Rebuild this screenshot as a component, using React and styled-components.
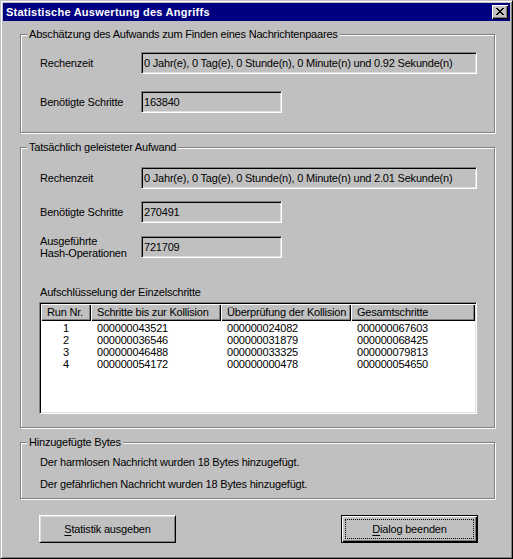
import React from 'react';
import styled, { createGlobalStyle, css } from 'styled-components';

const Global = createGlobalStyle`
  html, body { margin: 0; padding: 0; background: #c0c0c0; }
  body {
    font-family: "Liberation Sans", Arial, sans-serif;
    font-size: 11px;
    letter-spacing: -0.2px;
    color: #000;
  }
  * { box-sizing: border-box; }
`;

const Window = styled.div`
  width: 513px;
  height: 559px;
  background: #c0c0c0;
  border: 1px solid;
  border-color: #c0c0c0 #000 #000 #c0c0c0;
  box-shadow: inset 1px 1px #fff, inset -1px -1px #808080;
  padding: 2px;
  display: flex;
  flex-direction: column;
`;

const TitleBar = styled.div`
  height: 18px;
  background: #000080;
  display: flex;
  align-items: center;
  justify-content: space-between;
  padding: 0 2px 0 3px;
`;

const Title = styled.span`
  color: #fff;
  font-weight: bold;
  font-size: 11px;
  letter-spacing: 0.25px;
  line-height: 18px;
`;

const CloseButton = styled.div`
  width: 16px;
  height: 14px;
  background: #c0c0c0;
  box-shadow: inset 1px 1px #fff, inset -1px -1px #000, inset -2px -2px #808080;
  display: flex;
  align-items: flex-start;
  justify-content: flex-start;
  padding: 3px 0 0 4px;
  svg { display: block; }
`;

const Body = styled.div`
  flex: 1;
  display: flex;
  flex-direction: column;
  padding: 7px 15px 0 17px;
`;

const Group = styled.fieldset`
  margin: 0 0 ${p => p.$mb || 0}px 0;
  padding: 0;
  min-width: 0;
  border: 1px solid #808080;
  box-shadow: 1px 1px 0 #fff, inset 1px 1px 0 #fff;
`;

const Legend = styled.legend`
  margin-left: 6px;
  padding: 0 2px;
  background: #c0c0c0;
  line-height: 13px;
  height: 13px;
`;

const GroupBody = styled.div`
  padding: ${p => p.$pt}px 0 ${p => p.$pb}px 18px;
  display: flex;
  flex-direction: column;
  align-items: flex-start;
`;

const FieldGrid = styled.div`
  display: grid;
  grid-template-columns: 101px max-content;
  row-gap: ${p => p.$gap}px;
  align-items: center;
  margin-left: 1px;
`;

const Label = styled.div`
  line-height: 12px;
`;

const Field = styled.div`
  width: ${p => p.$w}px;
  height: 22px;
  border: 1px solid;
  border-color: #808080 #fff #fff #808080;
  box-shadow: inset 1px 1px #000, inset -1px -1px #dfdfdf;
  padding: 0 2px;
  line-height: 20px;
  white-space: nowrap;
  overflow: hidden;
`;

const Caption = styled.div`
  margin: 27px 0 3px 1px;
  line-height: 13px;
`;

const ListView = styled.div`
  width: 438px;
  height: 112px;
  border: 1px solid;
  border-color: #808080 #fff #fff #808080;
  box-shadow: inset 1px 1px #000, inset -1px -1px #dfdfdf;
  padding: 1px;
  background: #fff;
  display: flex;
  flex-direction: column;
`;

const columns = '50px 130px 130px 1fr';

const HeaderRow = styled.div`
  display: grid;
  grid-template-columns: ${columns};
`;

const HeadCell = styled.div`
  height: 17px;
  background: #c0c0c0;
  box-shadow: inset 1px 1px #fff, inset -1px -1px #000, inset -2px -2px #808080;
  padding-left: 6px;
  line-height: 16px;
  white-space: nowrap;
  overflow: hidden;
`;

const Rows = styled.div`
  padding-top: 1px;
`;

const Row = styled.div`
  display: grid;
  grid-template-columns: ${columns};
  height: 12px;
  line-height: 12px;
`;

const Cell = styled.div`
  padding-left: ${p => (p.$center ? 0 : 6)}px;
  text-align: ${p => (p.$center ? 'center' : 'left')};
  white-space: nowrap;
`;

const Line = styled.div`
  line-height: 13px;
  margin-left: 1px;
  & + & { margin-top: 9px; }
`;

const ButtonRow = styled.div`
  display: flex;
  justify-content: space-between;
  margin-top: 16px;
  padding: 0 17px 0 19px;
`;

const Button = styled.button`
  width: 137px;
  height: 28px;
  padding: 3px;
  margin: 0;
  background: #c0c0c0;
  font: inherit;
  letter-spacing: inherit;
  color: #000;
  border: 1px solid;
  border-color: #fff #000 #000 #fff;
  box-shadow: inset 1px 1px #dfdfdf, inset -1px -1px #808080;
  ${p => p.$default && css`
    border-color: #000;
    box-shadow: inset 1px 1px #fff, inset -1px -1px #000, inset -2px -2px #808080;
  `}
`;

const ButtonLabel = styled.span`
  display: flex;
  align-items: center;
  justify-content: center;
  height: 100%;
  border: 1px dotted ${p => (p.$focus ? '#000' : 'transparent')};
  u { text-decoration: underline; text-underline-offset: 2px; }
`;

const CloseGlyph = () => (
  <svg width="8" height="7" viewBox="0 0 8 7" shapeRendering="crispEdges">
    <g fill="#000">
      <rect x="0" y="0" width="2" height="1" />
      <rect x="6" y="0" width="2" height="1" />
      <rect x="1" y="1" width="2" height="1" />
      <rect x="5" y="1" width="2" height="1" />
      <rect x="2" y="2" width="4" height="1" />
      <rect x="3" y="3" width="2" height="1" />
      <rect x="2" y="4" width="4" height="1" />
      <rect x="1" y="5" width="2" height="1" />
      <rect x="5" y="5" width="2" height="1" />
      <rect x="0" y="6" width="2" height="1" />
      <rect x="6" y="6" width="2" height="1" />
    </g>
  </svg>
);

const runs = [
  ['1', '000000043521', '000000024082', '000000067603'],
  ['2', '000000036546', '000000031879', '000000068425'],
  ['3', '000000046488', '000000033325', '000000079813'],
  ['4', '000000054172', '000000000478', '000000054650'],
];

export default function App() {
  return (
    <>
      <Global />
      <Window>
        <TitleBar>
          <Title>Statistische Auswertung des Angriffs</Title>
          <CloseButton><CloseGlyph /></CloseButton>
        </TitleBar>
        <Body>
          <Group $mb={8}>
            <Legend>Abschätzung des Aufwands zum Finden eines Nachrichtenpaares</Legend>
            <GroupBody $pt={11} $pb={19}>
              <FieldGrid $gap={17}>
                <Label>Rechenzeit</Label>
                <Field $w={336}>0 Jahr(e), 0 Tag(e), 0 Stunde(n), 0 Minute(n) und 0.92 Sekunde(n)</Field>
                <Label>Benötigte Schritte</Label>
                <Field $w={141}>163840</Field>
              </FieldGrid>
            </GroupBody>
          </Group>

          <Group $mb={8}>
            <Legend>Tatsächlich geleisteter Aufwand</Legend>
            <GroupBody $pt={13} $pb={13}>
              <FieldGrid $gap={12}>
                <Label>Rechenzeit</Label>
                <Field $w={336}>0 Jahr(e), 0 Tag(e), 0 Stunde(n), 0 Minute(n) und 2.01 Sekunde(n)</Field>
                <Label>Benötigte Schritte</Label>
                <Field $w={141}>270491</Field>
                <Label>Ausgeführte<br />Hash-Operationen</Label>
                <Field $w={141}>721709</Field>
              </FieldGrid>
              <Caption>Aufschlüsselung der Einzelschritte</Caption>
              <ListView>
                <HeaderRow>
                  <HeadCell>Run Nr.</HeadCell>
                  <HeadCell>Schritte bis zur Kollision</HeadCell>
                  <HeadCell>Überprüfung der Kollision</HeadCell>
                  <HeadCell>Gesamtschritte</HeadCell>
                </HeaderRow>
                <Rows>
                  {runs.map(r => (
                    <Row key={r[0]}>
                      <Cell $center>{r[0]}</Cell>
                      <Cell>{r[1]}</Cell>
                      <Cell>{r[2]}</Cell>
                      <Cell>{r[3]}</Cell>
                    </Row>
                  ))}
                </Rows>
              </ListView>
            </GroupBody>
          </Group>

          <Group>
            <Legend>Hinzugefügte Bytes</Legend>
            <GroupBody $pt={7} $pb={7}>
              <Line>Der harmlosen Nachricht wurden 18 Bytes hinzugefügt.</Line>
              <Line>Der gefährlichen Nachricht wurden 18 Bytes hinzugefügt.</Line>
            </GroupBody>
          </Group>

          <ButtonRow>
            <Button>
              <ButtonLabel><span><u>S</u>tatistik ausgeben</span></ButtonLabel>
            </Button>
            <Button $default>
              <ButtonLabel $focus><span><u>D</u>ialog beenden</span></ButtonLabel>
            </Button>
          </ButtonRow>
        </Body>
      </Window>
    </>
  );
}
